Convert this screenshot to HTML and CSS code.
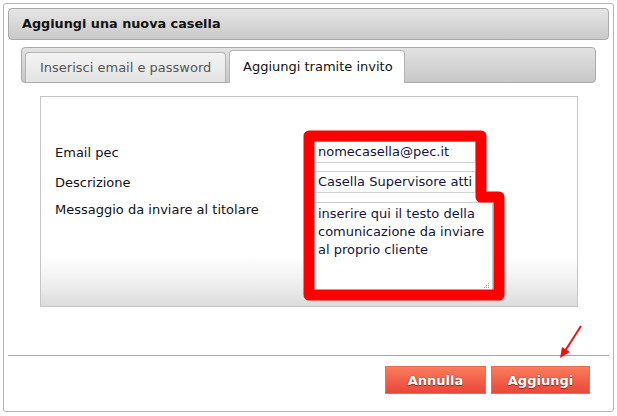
FILE: index.html
```html
<!DOCTYPE html>
<html lang="it">
<head>
<meta charset="utf-8">
<title>Aggiungi una nuova casella</title>
<link rel="stylesheet" href="styles.css">
</head>
<body>
<div class="dialog">
  <div class="header">Aggiungi una nuova casella</div>
  <div class="tabbar">
    <div class="tab">Inserisci email e password</div>
    <div class="tab active">Aggiungi tramite invito</div>
  </div>
  <div class="panel">
    <div class="form">
      <label class="lbl">Email pec</label>
      <div class="field">nomecasella@pec.it</div>
      <label class="lbl">Descrizione</label>
      <div class="field">Casella Supervisore atti</div>
      <label class="lbl lbl-top">Messaggio da inviare al titolare</label>
      <div class="area">inserire qui il testo della comunicazione da inviare al proprio cliente
        <svg class="grip" width="6" height="6" viewBox="0 0 6 6"><g fill="#aaa"><rect x="5" y="0" width="1" height="1"/><rect x="3" y="2" width="1" height="1"/><rect x="5" y="2" width="1" height="1"/><rect x="1" y="4" width="1" height="1"/><rect x="3" y="4" width="1" height="1"/><rect x="5" y="4" width="1" height="1"/></g></svg>
      </div>
    </div>
    <svg class="highlight" width="220" height="190" viewBox="0 0 220 190">
      <path d="M 8 8 L 180 8 L 180 69 L 198 69 L 198 167 L 8 167 Z" fill="none" stroke="#ff0000" stroke-width="11" stroke-linejoin="round"/>
    </svg>
  </div>
  <div class="footer">
    <button class="btn">Annulla</button>
    <button class="btn btn-wide">Aggiungi</button>
    <svg class="arrow" width="30" height="36" viewBox="0 0 30 36">
      <line x1="26" y1="1" x2="10" y2="26" stroke="#ee1111" stroke-width="2"/>
      <path d="M 5 33 L 7 22 L 15 27 Z" fill="#ee1111"/>
    </svg>
  </div>
</div>
</body>
</html>
```
FILE: styles.css
```css
html, body {
  margin: 0;
  padding: 0;
  background: #ffffff;
}
body {
  font-family: "DejaVu Sans", Verdana, sans-serif;
  font-size: 13px;
  color: #111;
}
.dialog {
  position: relative;
  margin: 3px;
  width: 601px;
  height: 399px;
  border: 1px solid #b4b4b4;
  border-radius: 3px;
  padding: 4px;
  display: flex;
  flex-direction: column;
}
.header {
  height: 30px;
  border: 1px solid #a9a9a9;
  border-radius: 4px;
  background: linear-gradient(to bottom, #e6e6e6, #c9c9c9);
  font-weight: bold;
  font-size: 12.8px;
  line-height: 30px;
  padding-left: 13px;
  color: #111;
}
.tabbar {
  margin: 7px 0 0 13px;
  width: 570px;
  height: 34px;
  border: 1px solid #ababab;
  border-radius: 4px;
  background: linear-gradient(to bottom, #e2e2e2, #c8c8c8);
  display: flex;
  align-items: flex-end;
  gap: 3px;
  padding-left: 3px;
}
.tab {
  box-sizing: border-box;
  height: 30px;
  line-height: 29px;
  padding: 0 0 0 14px;
  border: 1px solid #b4b4b4;
  border-bottom: none;
  border-radius: 4px 4px 0 0;
  background: linear-gradient(to bottom, #f3f3f3, #e4e4e4);
  color: #555;
  font-size: 13px;
  width: 201px;
  white-space: nowrap;
}
.tab.active {
  background: #ffffff;
  color: #111;
  height: 33px;
  line-height: 32px;
  padding-left: 13px;
  margin-bottom: -1px;
  width: 176px;
}
.panel {
  position: relative;
  margin: 13px 0 0 32px;
  width: 536px;
  height: 209px;
  border: 1px solid #c6c6c6;
  background: linear-gradient(to bottom, #ffffff 0, #ffffff 76%, #f2f2f2 87%, #dcdcdc 100%);
}
.form {
  display: grid;
  grid-template-columns: 258px auto;
  row-gap: 8px;
  padding: 44px 0 0 14px;
  align-items: center;
}
.lbl {
  font-size: 13px;
  color: #111;
}
.lbl-top {
  align-self: start;
  padding-top: 1px;
}
.field {
  width: 157px;
  height: 20px;
  line-height: 20px;
  border: 1px solid #d2d2d2;
  border-radius: 2px;
  padding-left: 4px;
  font-size: 13px;
  color: #14143a;
  white-space: nowrap;
  overflow: hidden;
  background: #fff;
}
.area {
  position: relative;
  width: 174px;
  height: 87px;
  border: 1px solid #c8c8c8;
  border-radius: 2px;
  padding: 2px 0 0 4px;
  font-size: 13px;
  line-height: 18px;
  color: #14143a;
  background: #fff;
  margin-top: 1px;
}
.grip {
  position: absolute;
  right: 3px;
  bottom: 3px;
}
.highlight {
  position: absolute;
  left: 260px;
  top: 31px;
}
.footer {
  position: relative;
  margin-top: auto;
  border-top: 1px solid #a8a8a8;
  height: 52px;
  display: flex;
  justify-content: flex-end;
  align-items: flex-start;
  gap: 5px;
  padding: 10px 19px 0 0;
  box-sizing: border-box;
}
.btn {
  height: 28px;
  border: 1px solid #ec6b55;
  background: linear-gradient(to bottom, #fb7c5c, #e9473a);
  color: #fff;
  font-family: "DejaVu Sans", Verdana, sans-serif;
  font-weight: bold;
  font-size: 13px;
  text-shadow: 0 0 1px #8a2a20, 0 1px 1px #8a2a20;
  padding: 0;
  width: 101px;
}
.btn-wide {
  width: 99px;
}
.arrow {
  position: absolute;
  right: 24px;
  top: -31px;
}
```
